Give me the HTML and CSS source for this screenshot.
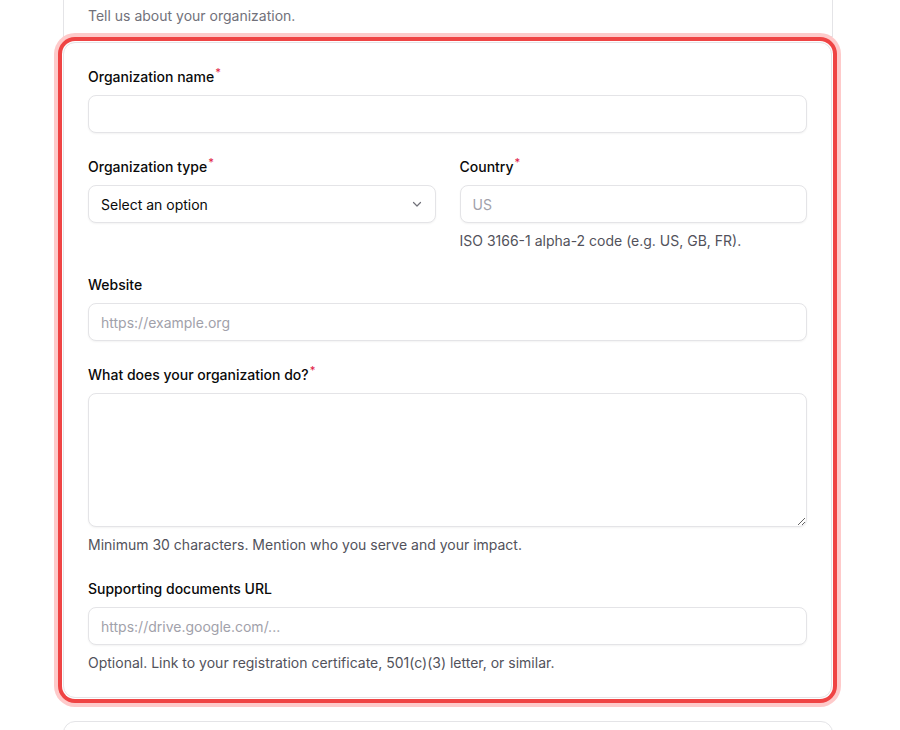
FILE: index.html
```html
<!DOCTYPE html>
<html lang="en">
<head>
<meta charset="utf-8">
<title>Organization</title>
<link rel="stylesheet" href="styles.css">
</head>
<body>
<div class="page">
  <section class="card card-top">
    <p class="card-desc">Tell us about your organization.</p>
  </section>

  <section class="card card-focus">
    <div class="field">
      <label class="label">Organization name<span class="req">*</span></label>
      <input class="input" type="text">
    </div>

    <div class="row">
      <div class="field">
        <label class="label">Organization type<span class="req">*</span></label>
        <div class="select">
          <span>Select an option</span>
          <svg class="chev" width="12" height="12" viewBox="0 0 12 12" fill="none"><path d="M2.5 4.5 6 8 9.5 4.5" stroke="#71717a" stroke-width="1.2" stroke-linecap="round" stroke-linejoin="round"/></svg>
        </div>
      </div>
      <div class="field">
        <label class="label">Country<span class="req">*</span></label>
        <input class="input" type="text" placeholder="US">
        <p class="help">ISO 3166-1 alpha-2 code (e.g. US, GB, FR).</p>
      </div>
    </div>

    <div class="field">
      <label class="label">Website</label>
      <input class="input" type="text" placeholder="https://example.org">
    </div>

    <div class="field">
      <label class="label">What does your organization do?<span class="req">*</span></label>
      <textarea class="input textarea"></textarea>
      <p class="help">Minimum 30 characters. Mention who you serve and your impact.</p>
    </div>

    <div class="field">
      <label class="label">Supporting documents URL</label>
      <input class="input" type="text" placeholder="https://drive.google.com/...">
      <p class="help">Optional. Link to your registration certificate, 501(c)(3) letter, or similar.</p>
    </div>
  </section>

  <section class="card card-next"></section>
</div>
</body>
</html>
```

FILE: styles.css
```css
* { box-sizing: border-box; }

html, body {
  margin: 0;
  padding: 0;
  background: #ffffff;
  font-family: Inter, "Liberation Sans", sans-serif;
  color: #0a0a0a;
}

.page {
  width: 770px;
  margin-left: 63px;
}

.card {
  background: #ffffff;
  border: 1px solid #e4e4e7;
  border-radius: 12px;
}

.card-top {
  border-top: none;
  border-radius: 0;
  padding: 6px 24px 10px;
}

.card-desc {
  margin: 0;
  font-size: 14px;
  line-height: 20px;
  color: #71717a;
}

.card-focus {
  margin-top: 5px;
  width: 769px;
  padding: 24px;
  display: flex;
  flex-direction: column;
  gap: 24px;
  box-shadow: 0 0 0 1px #ffffff, 0 0 0 5px #ef4444, 0 0 0 9px #fecaca;
}

.card-next {
  margin-top: 23px;
  height: 40px;
}

.row {
  display: grid;
  grid-template-columns: 1fr 1fr;
  gap: 24px;
}

.field {
  display: flex;
  flex-direction: column;
  gap: 8px;
}

.label {
  font-size: 14px;
  line-height: 20px;
  font-weight: 500;
  color: #0a0a0a;
}

.req {
  color: #e11d48;
  font-size: 11px;
  vertical-align: 6px;
  line-height: 0;
  margin-left: 1px;
}

.input {
  display: block;
  width: 100%;
  height: 38px;
  padding: 0 12px;
  border: 1px solid #e4e4e7;
  border-radius: 8px;
  background: #ffffff;
  font-family: inherit;
  font-size: 14px;
  color: #0a0a0a;
  box-shadow: 0 1px 2px rgba(0, 0, 0, 0.05);
  outline: none;
}

.input::placeholder {
  color: #a1a1aa;
}

.textarea {
  height: 134px;
  padding: 8px 12px;
  resize: vertical;
}

.select {
  height: 38px;
  padding: 0 12px;
  border: 1px solid #e4e4e7;
  border-radius: 8px;
  background: #ffffff;
  box-shadow: 0 1px 2px rgba(0, 0, 0, 0.05);
  display: flex;
  align-items: center;
  justify-content: space-between;
  font-size: 14px;
  color: #0a0a0a;
}

.help {
  margin: 0;
  font-size: 14px;
  line-height: 20px;
  color: #52525b;
}
```
